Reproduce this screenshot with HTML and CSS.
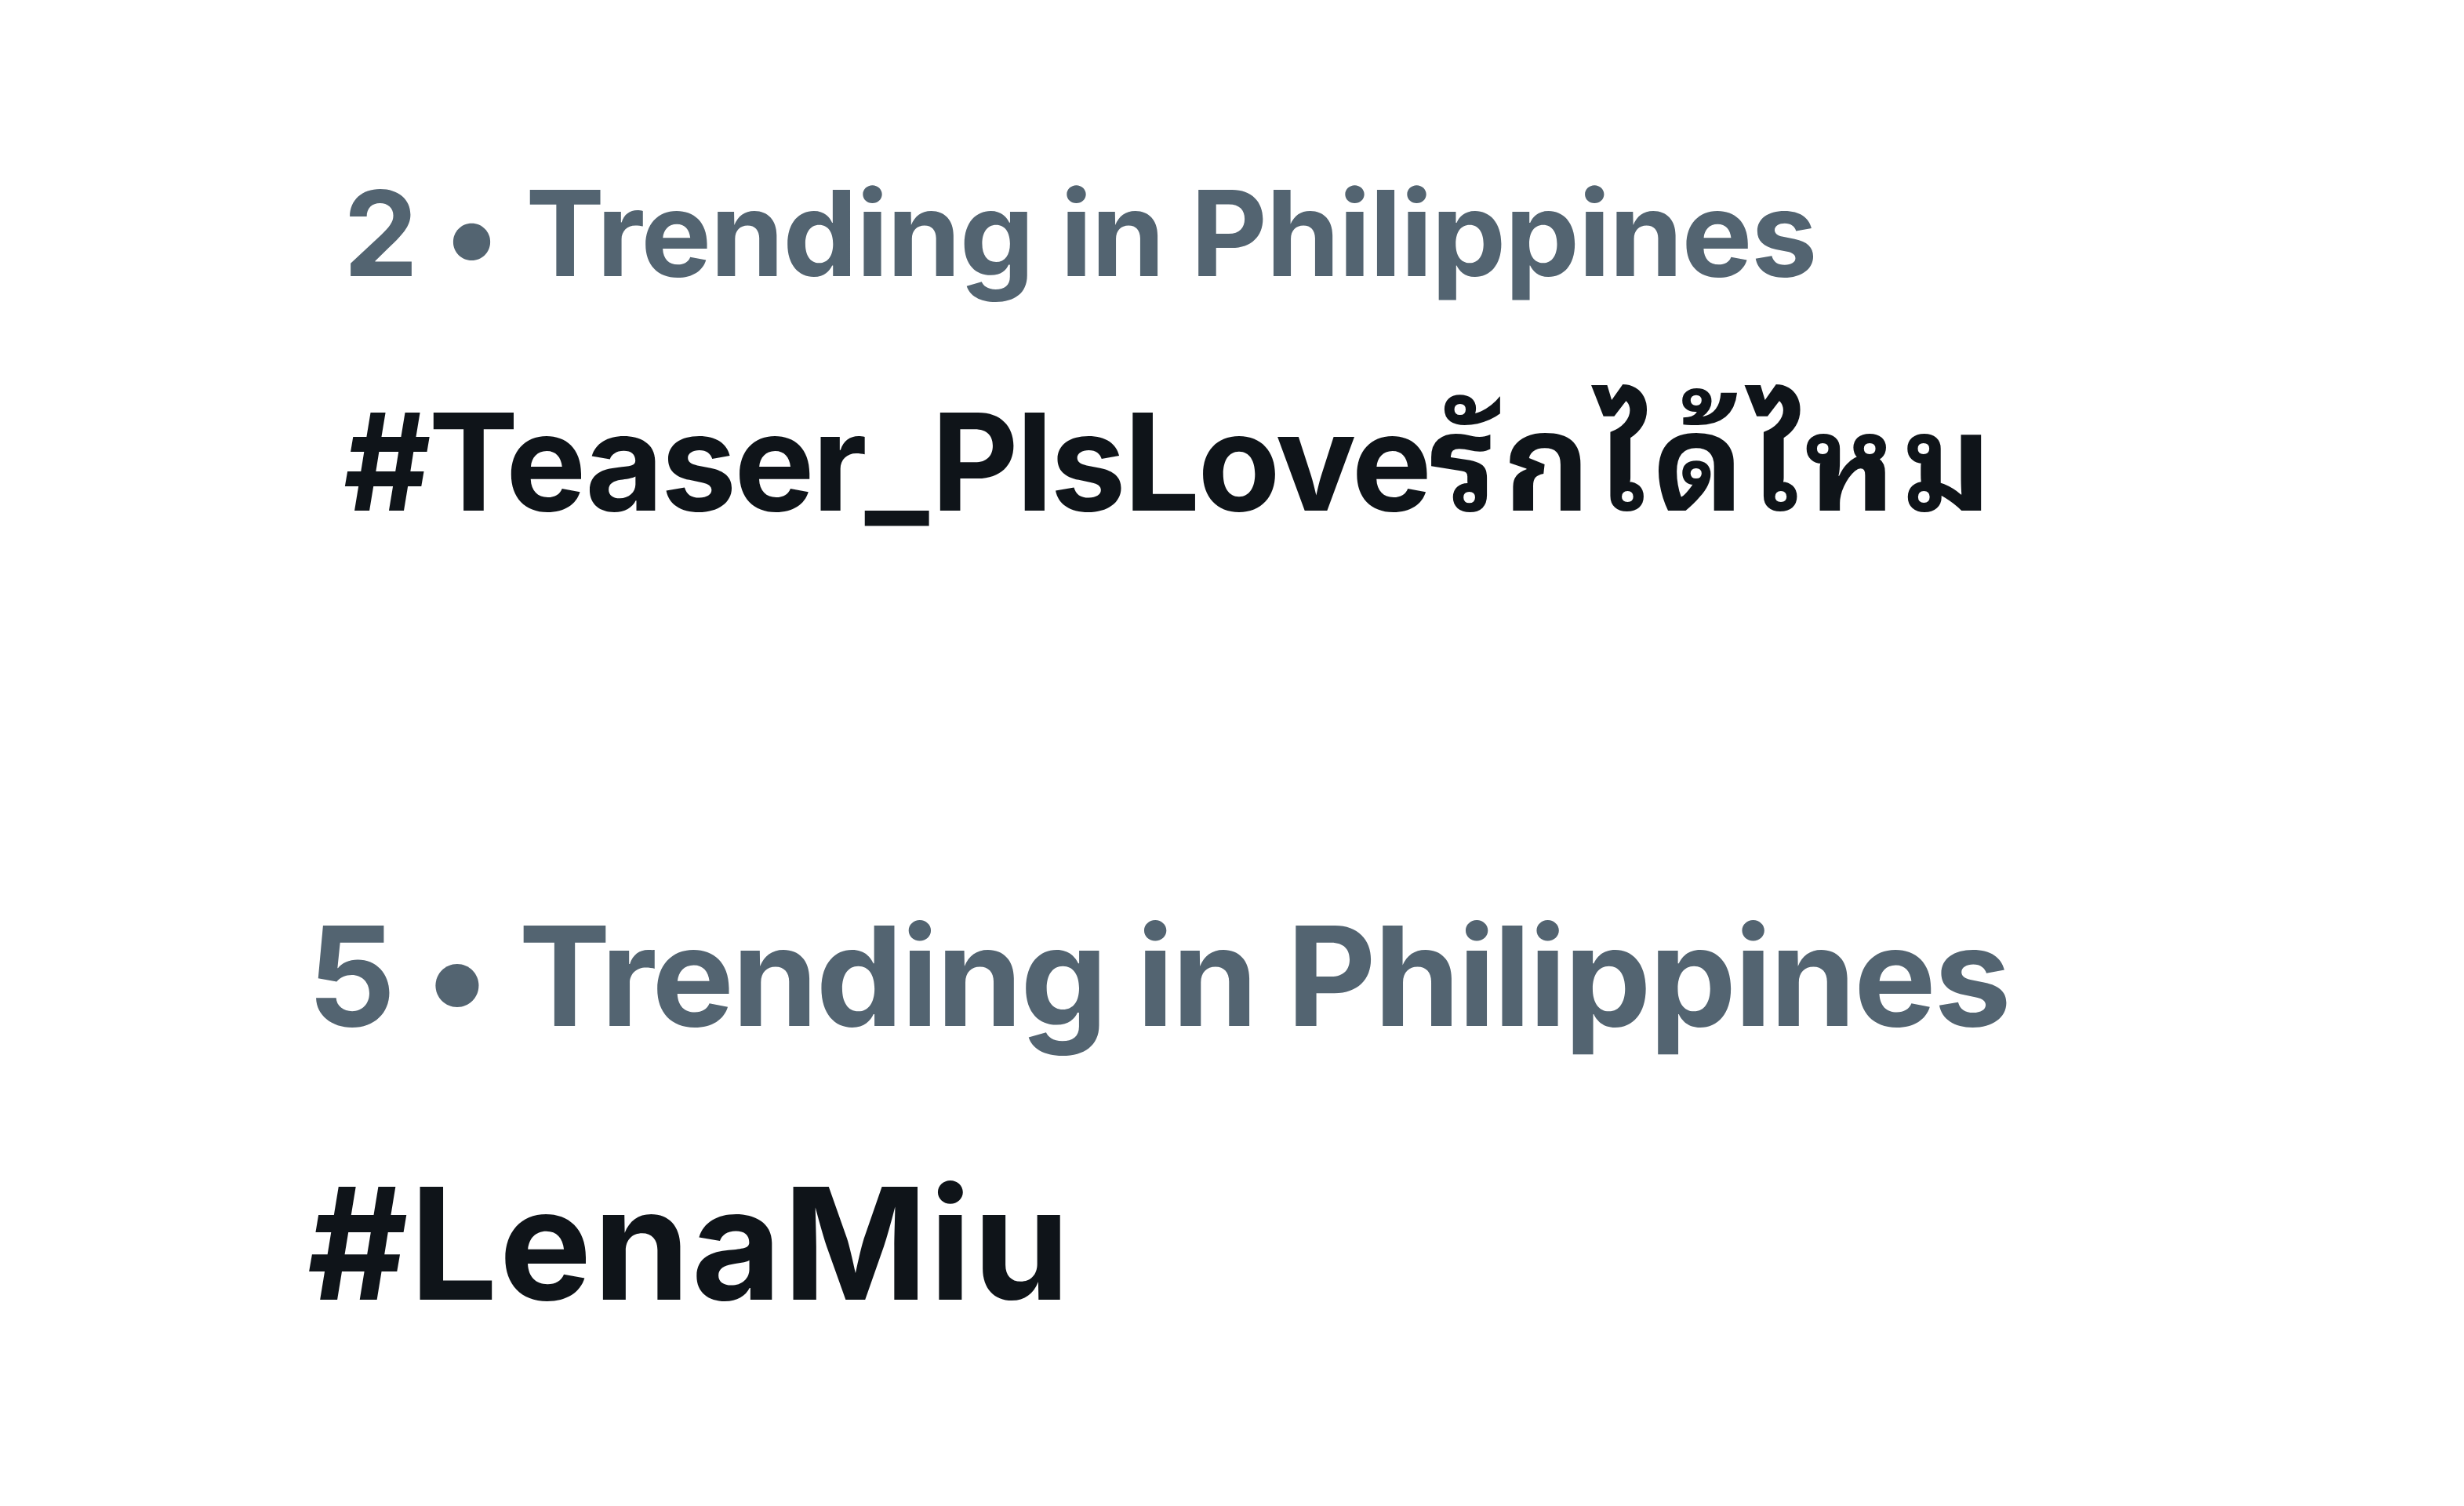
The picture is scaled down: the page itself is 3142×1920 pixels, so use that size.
FILE: index.html
```html
<!DOCTYPE html>
<html lang="en">
<head>
    <meta charset="UTF-8">
    <meta name="viewport" content="width=device-width, initial-scale=1.0">
    <title>Trending</title>
    <link rel="stylesheet" href="styles.css">
</head>
<body>
    <main class="trends">
        <!-- first trend card -->
        <div class="trend trend-small">
            <div class="trend-meta">2 • Trending in Philippines</div>
            <div class="trend-name">#Teaser_PlsLove<span class="thai">รักได้ไหม</span></div>
        </div>

        <!-- second trend card, a bit bigger -->
        <div class="trend trend-large">
            <div class="trend-meta">5 • Trending in Philippines</div>
            <div class="trend-name">#LenaMiu</div>
        </div>
    </main>
</body>
</html>
```

FILE: styles.css
```css
body {
    margin: 0;
    padding: 0;
    background: #fff;
    font-family: "Inter", "Noto Sans Thai Looped", "Loma", "Garuda", "Noto Sans Thai", "Noto Sans", sans-serif;
}

.trends {
    display: flex;
    flex-direction: column;
}

.trend {
    display: flex;
    flex-direction: column;
}

.trend-meta {
    color: #536471;
    font-weight: 700;
    line-height: 1;
}

.trend-name {
    color: #0f1419;
    font-weight: 700;
    line-height: 1;
}

/* thai part of a hashtag runs a bit looser */
.thai {
    letter-spacing: 8px;
}

/* top card */
.trend-small {
    padding: 222px 0 0 438px;
    gap: 129px;
}

.trend-small .trend-meta {
    font-size: 151px;
    letter-spacing: -1.5px;
}

.trend-small .trend-name {
    font-size: 172px;
    letter-spacing: -3px;
}

/* bottom card */
.trend-large {
    padding: 482px 0 0 392px;
    gap: 154px;
}

.trend-large .trend-meta {
    font-size: 176px;
    letter-spacing: -2.5px;
}

.trend-large .trend-name {
    font-size: 198px;
    letter-spacing: 2px;
}
```
